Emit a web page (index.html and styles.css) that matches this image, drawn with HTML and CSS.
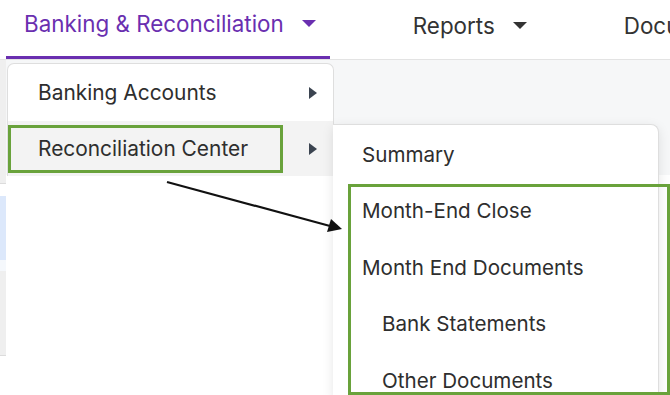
FILE: index.html
```html
<!DOCTYPE html>
<html lang="en">
<head>
    <meta charset="UTF-8">
    <meta name="viewport" content="width=device-width, initial-scale=1.0">
    <title>Banking &amp; Reconciliation</title>
    <link rel="stylesheet" href="styles.css">
</head>
<body>
    <header class="topnav">
        <div class="nav-item active">
            <span>Banking &amp; Reconciliation</span>
            <span class="caret"></span>
        </div>
        <div class="nav-item">
            <span>Reports</span>
            <span class="caret"></span>
        </div>
        <div class="nav-item">
            <span>Documents</span>
        </div>
    </header>

    <div class="content">
        <div class="edge">
            <div class="edge-gray"></div>
            <div class="edge-blue"></div>
            <div class="edge-light"></div>
            <div class="edge-gray tall"></div>
        </div>
        <div class="page">
            <div class="sheet"></div>
        </div>

        <!-- first level dropdown -->
        <div class="menu menu-main">
            <div class="menu-row">
                <span>Banking Accounts</span>
                <span class="arrow"></span>
            </div>
            <div class="menu-row hover">
                <span>Reconciliation Center</span>
                <span class="arrow"></span>
            </div>
        </div>
        <div class="highlight hl-center"></div>

        <!-- second level dropdown -->
        <div class="menu menu-sub">
            <div class="sub-row">Summary</div>
            <div class="sub-row">Month-End Close</div>
            <div class="sub-row">Month End Documents</div>
            <div class="sub-row indent">Bank Statements</div>
            <div class="sub-row indent">Other Documents</div>
        </div>
        <div class="highlight hl-docs"></div>

        <svg class="pointer" width="670" height="336" viewBox="0 59 670 336">
            <line x1="167" y1="181" x2="330" y2="225" stroke="#111" stroke-width="2.2"/>
            <polygon points="342,228 327,231 331,218" fill="#111"/>
        </svg>
    </div>
</body>
</html>
```

FILE: styles.css
```css
body {
    margin: 0;
    font-family: Inter, "Noto Sans", sans-serif;
    color: #2e2e2e;
    background: #fff;
    width: 670px;
    height: 395px;
    overflow: hidden;
}

.topnav {
    height: 59px;
    display: flex;
    align-items: stretch;
    border-bottom: 1px solid #e3e3e3;
    padding-left: 6px;
    gap: 65px;
    white-space: nowrap;
    overflow: hidden;
}

.nav-item {
    display: flex;
    align-items: center;
    gap: 18px;
    padding: 0 14px 5px 18px;
    font-size: 22.4px;
    color: #333;
    border-bottom: 3px solid transparent;
}

.nav-item.active {
    color: #6a2fb0;
    border-bottom-color: #6a2fb0;
    padding-bottom: 10px;
}

.caret {
    width: 0;
    height: 0;
    border-left: 7px solid transparent;
    border-right: 7px solid transparent;
    border-top: 7px solid currentColor;
}

.content {
    position: relative;
    display: flex;
    height: 335px;
    overflow: hidden;
}

.edge {
    width: 6px;
    display: flex;
    flex-direction: column;
}

.edge-gray {
    height: 123px;
    background: #efefef;
    border-bottom: 1px solid #dcdcdc;
}

.edge-gray.tall {
    height: 84px;
}

.edge-blue {
    margin-top: 12px;
    height: 64px;
    background: #dce8fb;
}

.edge-light {
    height: 11px;
    background: #f5f8fc;
}

.page {
    flex: 1;
    background: #f6f7f8;
    display: flex;
    flex-direction: column;
}

.sheet {
    margin-top: 115px;
    flex: 1;
    background: #fff;
}

.menu {
    position: absolute;
    background: #fff;
    border: 1px solid #dedede;
}

.menu-main {
    left: 7px;
    top: 3px;
    width: 325px;
    border-radius: 7px 7px 0 0;
    border-bottom: none;
    overflow: hidden;
}

.menu-row {
    height: 57px;
    display: flex;
    align-items: center;
    justify-content: space-between;
    padding: 0 16px 0 30px;
    font-size: 20.9px;
}

.menu-row.hover {
    height: 55px;
    background: #f3f3f3;
}

.arrow {
    width: 0;
    height: 0;
    border-top: 6.5px solid transparent;
    border-bottom: 6.5px solid transparent;
    border-left: 8px solid #3b4450;
}

.menu-sub {
    left: 333px;
    top: 64px;
    width: 325px;
    height: 272px;
    border-radius: 0 8px 0 0;
    border-left: none;
    border-bottom: none;
    box-shadow: 0 3px 12px rgba(0, 0, 0, 0.1);
    padding-top: 1px;
}

.sub-row {
    height: 56.5px;
    display: flex;
    align-items: center;
    padding-left: 29px;
    font-size: 20.6px;
}

.sub-row.indent {
    padding-left: 49px;
}

.highlight {
    position: absolute;
    border: 3px solid #69a23b;
    box-sizing: border-box;
}

.hl-center {
    left: 8px;
    top: 65px;
    width: 275px;
    height: 48px;
}

.hl-docs {
    left: 348px;
    top: 124px;
    width: 322px;
    height: 211px;
}

.pointer {
    position: absolute;
    left: 0;
    top: 0;
}
```
